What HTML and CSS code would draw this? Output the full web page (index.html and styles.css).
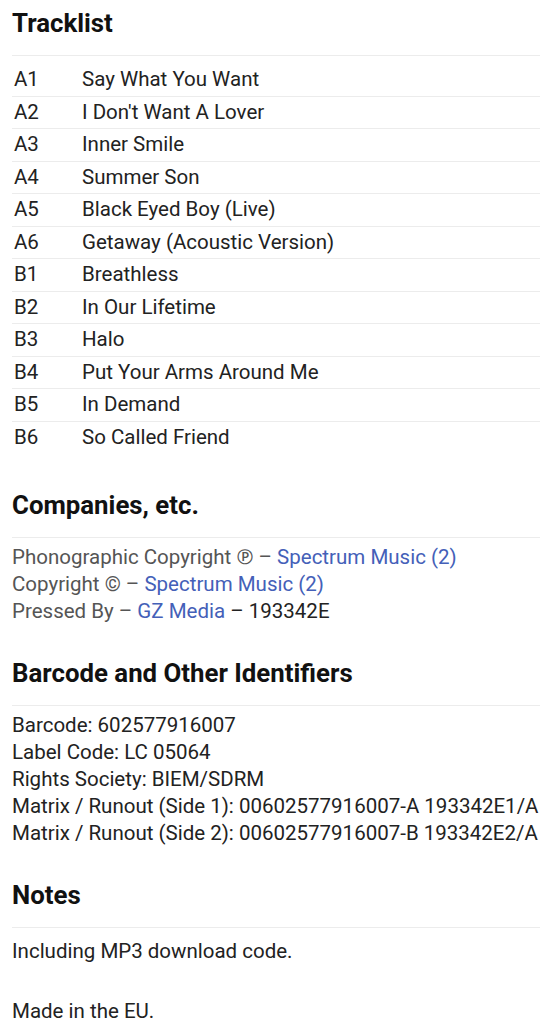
FILE: index.html
```html
<!DOCTYPE html>
<html lang="en">
<head>
<meta charset="utf-8">
<title>Release details</title>
<link rel="stylesheet" href="styles.css">
</head>
<body>
<main class="page">
  <section class="section">
    <h2 class="heading">Tracklist</h2>
    <ol class="tracklist">
      <li class="track"><span class="pos">A1</span><span class="title">Say What You Want</span></li>
      <li class="track"><span class="pos">A2</span><span class="title">I Don't Want A Lover</span></li>
      <li class="track"><span class="pos">A3</span><span class="title">Inner Smile</span></li>
      <li class="track"><span class="pos">A4</span><span class="title">Summer Son</span></li>
      <li class="track"><span class="pos">A5</span><span class="title">Black Eyed Boy (Live)</span></li>
      <li class="track"><span class="pos">A6</span><span class="title">Getaway (Acoustic Version)</span></li>
      <li class="track"><span class="pos">B1</span><span class="title">Breathless</span></li>
      <li class="track"><span class="pos">B2</span><span class="title">In Our Lifetime</span></li>
      <li class="track"><span class="pos">B3</span><span class="title">Halo</span></li>
      <li class="track"><span class="pos">B4</span><span class="title">Put Your Arms Around Me</span></li>
      <li class="track"><span class="pos">B5</span><span class="title">In Demand</span></li>
      <li class="track"><span class="pos">B6</span><span class="title">So Called Friend</span></li>
    </ol>
  </section>

  <section class="section section-companies">
    <h2 class="heading">Companies, etc.</h2>
    <ul class="lines">
      <li><span class="role">Phonographic Copyright ℗ – </span><a class="link" href="#">Spectrum Music (2)</a></li>
      <li><span class="role">Copyright © – </span><a class="link" href="#">Spectrum Music (2)</a></li>
      <li><span class="role">Pressed By – </span><a class="link" href="#">GZ Media</a> – 193342E</li>
    </ul>
  </section>

  <section class="section section-ids">
    <h2 class="heading">Barcode and Other Identifiers</h2>
    <ul class="lines">
      <li>Barcode: 602577916007</li>
      <li>Label Code: LC 05064</li>
      <li>Rights Society: BIEM/SDRM</li>
      <li>Matrix / Runout (Side 1): 00602577916007-A 193342E1/A</li>
      <li>Matrix / Runout (Side 2): 00602577916007-B 193342E2/A</li>
    </ul>
  </section>

  <section class="section section-notes">
    <h2 class="heading">Notes</h2>
    <div class="notes">
      <p class="note">Including MP3 download code.</p>
      <p class="note">Made in the EU.</p>
    </div>
  </section>
</main>
</body>
</html>
```

FILE: styles.css
```css
* { box-sizing: border-box; }

html, body {
  margin: 0;
  padding: 0;
  background: #ffffff;
}

body {
  font-family: Roboto, "Noto Sans", "Liberation Sans", sans-serif;
  color: #222;
  font-size: 20.5px;
}

.page {
  padding: 8px 11px 0 12px;
}

.section-companies { margin-top: 37px; }
.section-ids { margin-top: 33px; }
.section-notes { margin-top: 33px; }

.heading {
  margin: 0;
  font-size: 25.8px;
  font-weight: 700;
  line-height: 30px;
  padding-bottom: 17px;
  border-bottom: 1px solid #ececec;
  color: #111;
}

.tracklist {
  list-style: none;
  margin: 8px 0 0;
  padding: 0;
}

.track {
  display: flex;
  line-height: 23px;
  padding: 4px 0 4.5px 2px;
  border-bottom: 1px solid #ececec;
}

.track:last-child {
  border-bottom: none;
}

.pos {
  width: 68px;
  flex: none;
}

.lines {
  list-style: none;
  margin: 6px 0 0;
  padding: 0;
  line-height: 27px;
}

.role {
  color: #555;
}

.link {
  color: #4460b8;
  text-decoration: none;
}

.notes {
  margin-top: 10px;
  line-height: 27px;
}

.note {
  margin: 0 0 33px;
}
```
